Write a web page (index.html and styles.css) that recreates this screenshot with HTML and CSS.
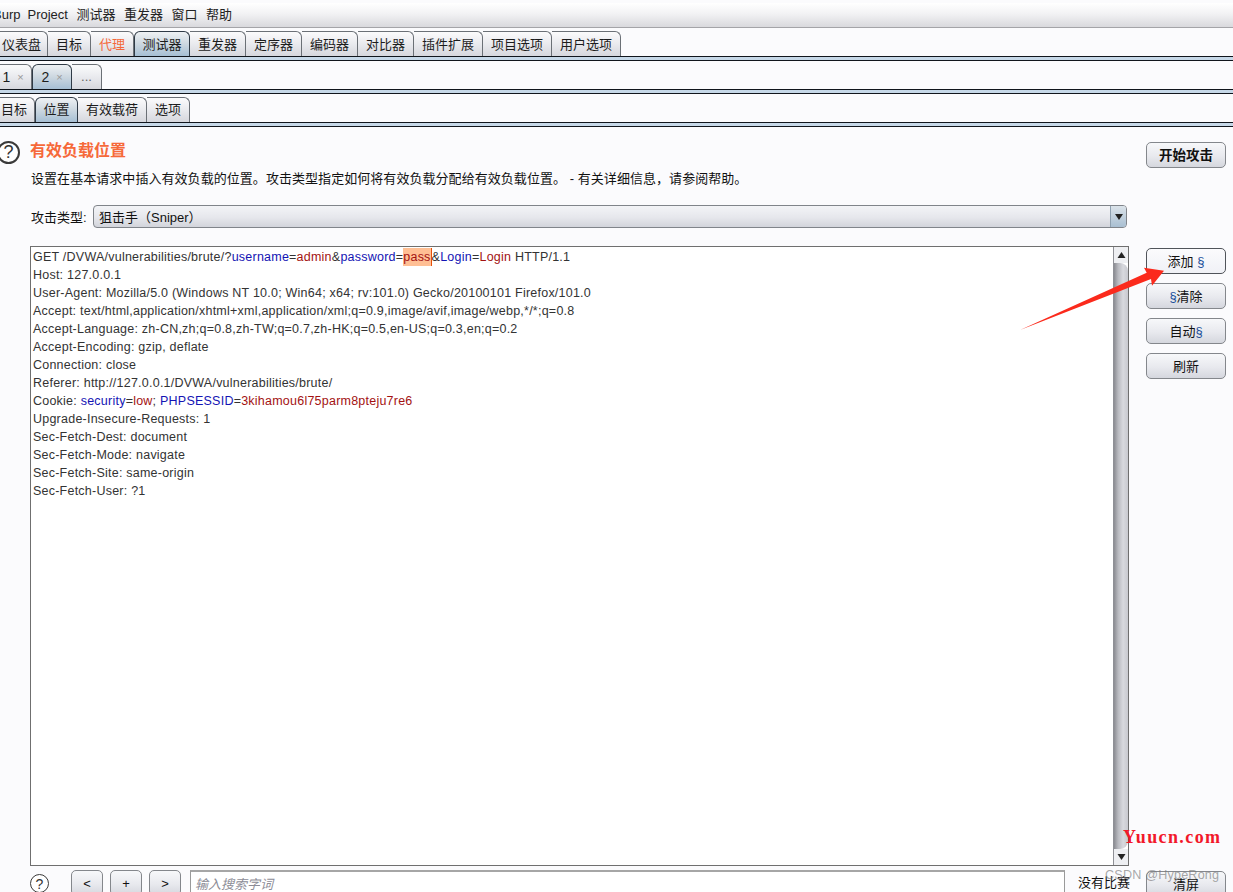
FILE: index.html
```html
<!DOCTYPE html>
<html lang="zh-CN">
<head>
<meta charset="utf-8">
<title>Burp Suite</title>
<link rel="stylesheet" href="styles.css">
</head>
<body>
<div class="app">
  <nav class="menu">
    <span class="menu-item first">Burp</span>
    <span class="menu-item">Project</span>
    <span class="menu-item">测试器</span>
    <span class="menu-item">重发器</span>
    <span class="menu-item">窗口</span>
    <span class="menu-item">帮助</span>
  </nav>

  <div class="tabs main-tabs">
    <span class="tab w-dash">仪表盘</span>
    <span class="tab w43">目标</span>
    <span class="tab w43 orange">代理</span>
    <span class="tab w56 active">测试器</span>
    <span class="tab w56">重发器</span>
    <span class="tab w56">定序器</span>
    <span class="tab w56">编码器</span>
    <span class="tab w56">对比器</span>
    <span class="tab w69">插件扩展</span>
    <span class="tab w69">项目选项</span>
    <span class="tab w69">用户选项</span>
  </div>
  <div class="band"></div>

  <div class="tabs sub-tabs">
    <span class="tab w-one num">1 <i class="x">×</i></span>
    <span class="tab w40 num active">2 <i class="x">×</i></span>
    <span class="tab w30 dots">...</span>
  </div>
  <div class="band"></div>

  <div class="tabs sub-tabs third">
    <span class="tab w-target">目标</span>
    <span class="tab w43 active">位置</span>
    <span class="tab w69">有效载荷</span>
    <span class="tab w43">选项</span>
  </div>
  <div class="band"></div>

  <main class="content">
    <div class="left">
      <header class="head">
        <span class="help big">?</span>
        <h1 class="title">有效负载位置</h1>
      </header>
      <p class="desc">设置在基本请求中插入有效负载的位置。攻击类型指定如何将有效负载分配给有效负载位置。 - 有关详细信息，请参阅帮助。</p>
      <div class="type-row">
        <label class="type-label">攻击类型:</label>
        <div class="select">
          <span class="select-text">狙击手（Sniper）</span>
          <span class="select-arrow"><svg width="10" height="8" viewBox="0 0 10 8"><path d="M1 1h8L5 7z" fill="#222"/></svg></span>
        </div>
      </div>
      <div class="editor">
        <div class="code">
          <div class="line">GET /DVWA/vulnerabilities/brute/?<b class="k">username</b>=<b class="v">admin</b>&amp;<b class="k">password</b>=<b class="v sel">pass</b>&amp;<b class="k">Login</b>=<b class="v">Login</b> HTTP/1.1</div>
          <div class="line">Host: 127.0.0.1</div>
          <div class="line">User-Agent: Mozilla/5.0 (Windows NT 10.0; Win64; x64; rv:101.0) Gecko/20100101 Firefox/101.0</div>
          <div class="line">Accept: text/html,application/xhtml+xml,application/xml;q=0.9,image/avif,image/webp,*/*;q=0.8</div>
          <div class="line">Accept-Language: zh-CN,zh;q=0.8,zh-TW;q=0.7,zh-HK;q=0.5,en-US;q=0.3,en;q=0.2</div>
          <div class="line">Accept-Encoding: gzip, deflate</div>
          <div class="line">Connection: close</div>
          <div class="line">Referer: http://127.0.0.1/DVWA/vulnerabilities/brute/</div>
          <div class="line">Cookie: <b class="k">security</b>=<b class="v">low</b>; <b class="k">PHPSESSID</b>=<b class="v">3kihamou6l75parm8pteju7re6</b></div>
          <div class="line">Upgrade-Insecure-Requests: 1</div>
          <div class="line">Sec-Fetch-Dest: document</div>
          <div class="line">Sec-Fetch-Mode: navigate</div>
          <div class="line">Sec-Fetch-Site: same-origin</div>
          <div class="line">Sec-Fetch-User: ?1</div>
        </div>
        <div class="scrollbar">
          <span class="sb-btn"><svg width="9" height="8" viewBox="0 0 9 8"><path d="M4.500 1L8.500 7H.5z" fill="#222"/></svg></span>
          <span class="sb-thumb"></span>
          <span class="sb-btn"><svg width="9" height="8" viewBox="0 0 9 8"><path d="M.5 1h8L4.500 7z" fill="#222"/></svg></span>
        </div>
      </div>
    </div>
    <aside class="side">
      <button class="btn lift bold">开始攻击</button>
      <button class="btn lift add">添加 <em class="sec">§</em></button>
      <button class="btn lift"><em class="sec">§</em>清除</button>
      <button class="btn lift">自动<em class="sec">§</em></button>
      <button class="btn lift">刷新</button>
    </aside>
  </main>

  <footer class="search">
    <span class="help small">?</span>
    <button class="btn nav">&lt;</button>
    <button class="btn nav">+</button>
    <button class="btn nav">&gt;</button>
    <div class="search-input">输入搜索字词</div>
    <span class="match">没有比赛</span>
    <button class="btn lift clear">清屏</button>
  </footer>
</div>

<svg class="arrow" width="160" height="70" viewBox="0 0 160 70">
  <path d="M0 64 L126.700 6.700 L124 1.700 L144 4.700 L132 19.700 L131 13 Z" fill="#fb2a1c"/>
</svg>
<span class="wm-site">Yuucn.com</span>
<span class="wm-csdn">CSDN @HypeRong</span>
</body>
</html>
```
FILE: styles.css
```css
* { box-sizing: border-box; }
html, body { margin: 0; height: 892px; overflow: hidden; }
body {
  position: relative;
  background: #fbfbfd;
  color: #111;
  font: 13px "Liberation Sans", "Noto Sans CJK SC", sans-serif;
}
.app { height: 892px; overflow: hidden; display: flex; flex-direction: column; padding-top: 3px; }

.menu {
  height: 25px; flex: none;
  display: flex; align-items: center; gap: 8.500px;
  background: linear-gradient(#ffffff, #f2f2f4 45%, #d9d9dd);
  border-bottom: 1px solid #a4a4a8;
}
.menu-item { white-space: nowrap; line-height: 24px; color: #222; }
.menu-item.first { margin: 0 -1.500px 0 -7px; }

.tabs { display: flex; align-items: flex-end; flex: none; height: 28px; padding-top: 3px; }
.tab {
  height: 25px; flex: none; padding-bottom: 1px;
  display: flex; align-items: center; justify-content: center;
  border: 1px solid #6b7076; border-bottom: 0; border-left: 0;
  border-radius: 0 6px 0 0;
  background: linear-gradient(#fbfbfc, #e9eaee 50%, #d6d7dd);
  color: #1c1c1c; font-size: 13px; white-space: nowrap;
}
.third .tab { padding-bottom: 3px; }
.tab.active {
  background: linear-gradient(#eef1f4, #ccd7e0 50%, #a6bfd4);
  border-color: #2f3a46; border-left: 1px solid #2f3a46; border-radius: 6px 6px 0 0;
}
.tab.orange { color: #f4683a; }
.w-dash { width: 52px; margin-left: -4px; }
.w-one { width: 37px; margin-left: -5px; }
.w-target { width: 41px; margin-left: -6px; }
.w30 { width: 30px; } .w40 { width: 40px; } .w43 { width: 43px; } .w56 { width: 56px; } .w69 { width: 69px; }
.num { gap: 7px; font-size: 14px; padding-bottom: 0; }
.x { color: #999; font-style: normal; font-size: 11px; }
.dots { color: #666; }

.band {
  height: 5px; flex: none;
  background: #c6d8e8;
  border-top: 1px solid #10151c; border-bottom: 1px solid #10151c;
}

.content { flex: none; display: flex; height: 739px; }
.left { width: 1146px; flex: none; padding-top: 13px; }
.head { display: flex; align-items: center; height: 24px; margin-left: -3px; }
.help {
  display: flex; align-items: center; justify-content: center; flex: none;
  border: 2px solid #3a3a3a; border-radius: 50%;
  color: #333; background: #fff;
}
.big { width: 23px; height: 23px; font-size: 18px; }
.title { margin: 0 0 2px 10px; font-size: 16px; line-height: 20px; font-weight: 700; color: #f6693a; }
.desc { margin: 6px 0 0 31px; font-size: 13px; line-height: 18px; letter-spacing: .05px; white-space: nowrap; }

.type-row { display: flex; align-items: center; margin: 17px 0 0 31px; height: 23px; }
.type-label { width: 62px; flex: none; }
.select {
  width: 1034px; height: 23px; flex: none;
  display: flex; align-items: center; justify-content: space-between;
  border: 1px solid #80848a; border-radius: 4px;
  background: linear-gradient(#f3f4f7, #e6e7ec 55%, #d2d4db);
}
.select-text { padding-left: 5px; }
.select-arrow {
  width: 16px; height: 21px;
  display: flex; align-items: center; justify-content: center;
  background: linear-gradient(#dbe3ea, #a9bfd2);
  border-left: 1px solid #8ea0b0; border-radius: 0 3px 3px 0;
}

.editor {
  width: 1099px; height: 620px; margin: 18px 0 0 30px;
  display: flex;
  background: #fff; border: 1px solid #6f6f6f;
}
.code { flex: 1; padding: 1px 0 0 2px; }
.line { height: 18px; line-height: 18px; font-size: 12.500px; letter-spacing: .23px; color: #333; white-space: nowrap; }
.k, .v { font-weight: 400; }
.k { color: #1414b4; }
.v { color: #a31212; }
.sel { display: inline-block; height: 18px; background: #ffbf94; border-right: 1px solid #e8500a; }

.scrollbar { width: 15px; flex: none; display: flex; flex-direction: column; background: #fff; border-left: 1px solid #8f9096; }
.sb-btn { height: 16px; flex: none; display: flex; align-items: center; justify-content: center; background: #eeeff2; }
.sb-thumb {
  flex: 1; border-radius: 0 8px 8px 0;
  background: linear-gradient(90deg, #8b8c92, #b9bac0 30%, #d8d9de 65%, #c8c9cf);
}

.side { width: 80px; flex: none; display: flex; flex-direction: column; gap: 9px; padding-top: 15px; }
.btn {
  width: 80px; height: 26px; flex: none; padding: 0;
  border: 1px solid #84878c; border-radius: 5px;
  background: linear-gradient(#f7f8fa, #e8e9ee 55%, #d5d7de);
  color: #111; font: 13px "Liberation Sans", "Noto Sans CJK SC", sans-serif;
}
.lift { padding-bottom: 2px; }
.btn.bold { font-weight: 700; font-size: 13.500px; margin-bottom: 71px; }
.btn.add { background: linear-gradient(#fbfbfd, #f0f1f6); border-color: #50545a; }
.sec { font-style: normal; color: #1a4f9a; }

.search { flex: none; display: flex; align-items: flex-start; padding: 4px 0 0 30px; height: 30px; }
.small { width: 19px; height: 19px; font-size: 14px; border-width: 1.500px; margin: 4px 22px 0 0; }
.nav { width: 32px; margin-right: 7px; }
.search-input {
  width: 875px; height: 24px; margin-left: 2px; padding: 5px 0 0 4px;
  background: #fff; border: 1px solid #9a9a9a; border-bottom: 0; border-top: 2px solid #a6a6a6;
  color: #8c8c96; font-style: italic; line-height: 16px;
}
.match { width: 81px; padding: 5px 0 0 13px; line-height: 16px; white-space: nowrap; flex: none; }
.clear { margin-top: 1px; }

.arrow { position: absolute; left: 1020px; top: 266px; }
.wm-site {
  position: absolute; left: 1123px; top: 827px;
  font: 700 18px "Liberation Serif", serif; letter-spacing: 1.400px; color: #f2182a;
}
.wm-csdn {
  position: absolute; left: 1105px; top: 868px;
  font-size: 12.600px; letter-spacing: .2px; color: rgba(120, 120, 120, .65); white-space: nowrap;
}
```
